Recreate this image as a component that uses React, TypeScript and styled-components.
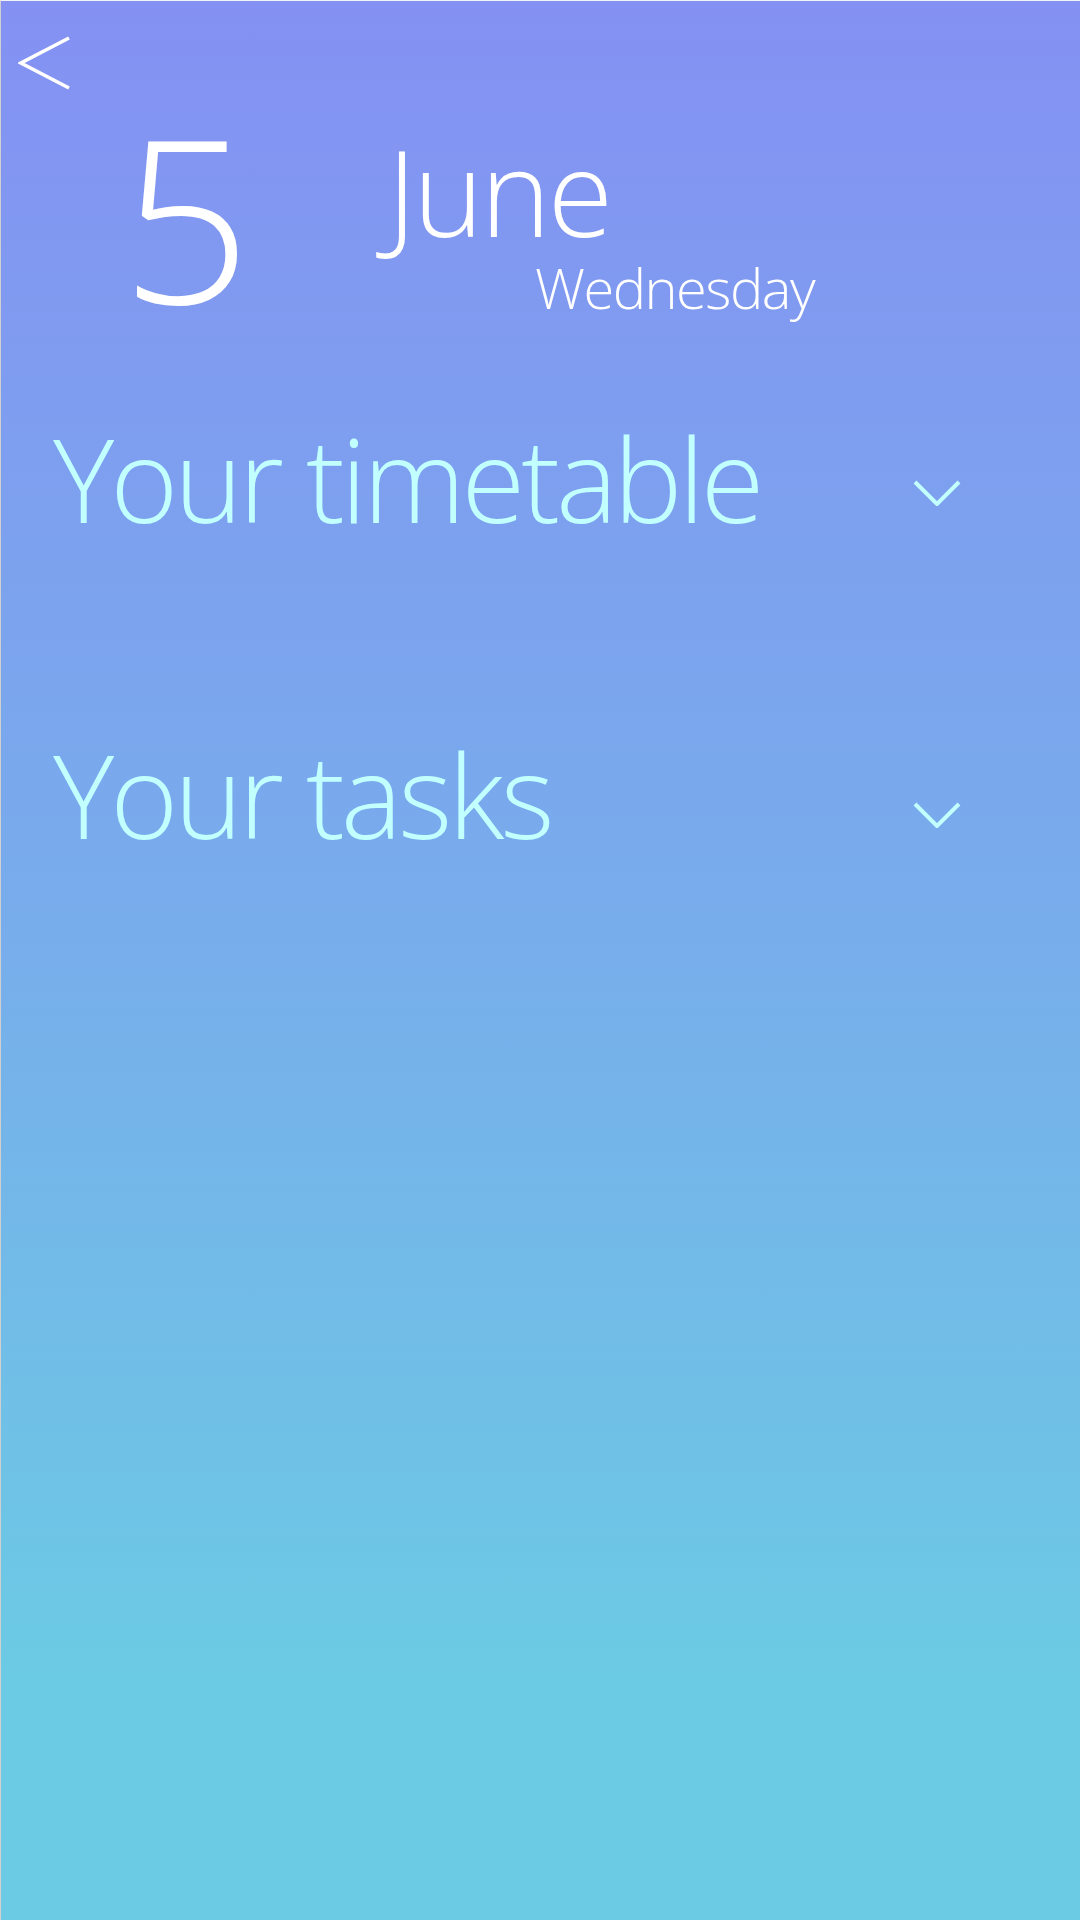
import React from 'react';
import styled, { createGlobalStyle } from 'styled-components';

const GlobalStyle = createGlobalStyle`
  html, body {
    margin: 0;
    padding: 0;
  }
  body {
    font-family: "Open Sans", "Noto Sans", sans-serif;
  }
`;

const Page = styled.div`
  min-height: 1920px;
  box-sizing: border-box;
  border-top: 1px solid #f2f2f2;
  border-left: 1px solid #d0d0d0;
  background: linear-gradient(180deg, #8491f3 0%, #77aeeb 50%, #6bcbe4 88%, #6bcbe4 100%);
  display: flex;
  flex-direction: column;
`;

const TopBar = styled.div`
  padding: 35px 0 0 17px;
  height: 54px;
`;

const BackButton = styled.button`
  border: none;
  background: none;
  padding: 0;
  width: 52px;
  height: 54px;
  cursor: pointer;
  display: block;
`;

const DateRow = styled.div`
  display: flex;
  align-items: flex-start;
  margin-top: 2px;
  color: #ffffff;
  font-weight: 300;
`;

const DayNumber = styled.div`
  font-size: 228px;
  line-height: 240px;
  padding-top: 4px;
  height: 236px;
  margin-left: 120px;
  width: 240px;
`;

const MonthBlock = styled.div`
  display: flex;
  flex-direction: column;
  margin-top: 40px;
  margin-left: 26px;
`;

const Month = styled.div`
  font-size: 119px;
  line-height: 119px;
  letter-spacing: -3px;
`;

const Weekday = styled.div`
  font-size: 56px;
  line-height: 56px;
  letter-spacing: -1.5px;
  margin-top: 8px;
  margin-left: 148px;
`;

const Sections = styled.div`
  display: flex;
  flex-direction: column;
  gap: 200px;
  margin-top: 88px;
`;

const SectionRow = styled.div`
  display: flex;
  align-items: flex-start;
  justify-content: space-between;
  padding: 0 119px 0 52px;
`;

const SectionTitle = styled.div`
  color: #c2ffff;
  font-weight: 300;
  font-size: 116px;
  line-height: 116px;
  letter-spacing: -4px;
`;

const Chevron = styled.svg<{ $offset: number }>`
  width: 48px;
  height: 26px;
  margin-top: ${(p) => p.$offset}px;
`;

function ChevronDown({ offset }: { offset: number }) {
  return (
    <Chevron $offset={offset} viewBox="0 0 48 26">
      <polyline points="2,2 24,24 46,2" fill="none" stroke="#c2ffff" strokeWidth="4" />
    </Chevron>
  );
}

const sections = [
  { title: 'Your timetable', offset: 60 },
  { title: 'Your tasks', offset: 66 },
];

export default function App() {
  return (
    <>
      <GlobalStyle />
      <Page>
        <TopBar>
          <BackButton aria-label="Back">
            <svg width="52" height="54" viewBox="0 0 52 54">
              <polyline points="51,2 3,27 51,52" fill="none" stroke="#ffffff" strokeWidth="3.5" />
            </svg>
          </BackButton>
        </TopBar>
        <DateRow>
          <DayNumber>5</DayNumber>
          <MonthBlock>
            <Month>June</Month>
            <Weekday>Wednesday</Weekday>
          </MonthBlock>
        </DateRow>
        <Sections>
          {sections.map((s) => (
            <SectionRow key={s.title}>
              <SectionTitle>{s.title}</SectionTitle>
              <ChevronDown offset={s.offset} />
            </SectionRow>
          ))}
        </Sections>
      </Page>
    </>
  );
}
